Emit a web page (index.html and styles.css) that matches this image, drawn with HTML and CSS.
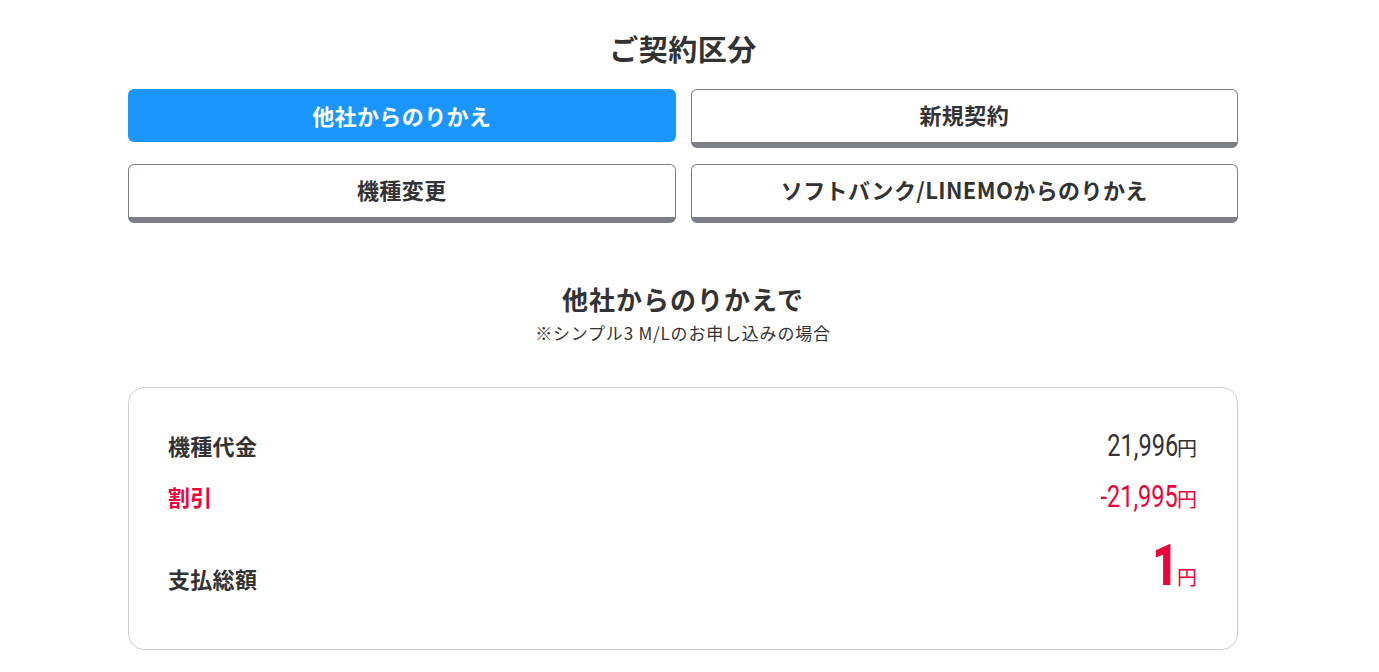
FILE: index.html
```html
<!DOCTYPE html>
<html lang="ja">
<head>
<meta charset="utf-8">
<link rel="stylesheet" href="styles.css">
</head>
<body>
<main class="wrap">
  <h2 class="title">ご契約区分</h2>
  <div class="tabs">
    <button class="tab active">他社からのりかえ</button>
    <button class="tab">新規契約</button>
    <button class="tab">機種変更</button>
    <button class="tab">ソフトバンク/LINEMOからのりかえ</button>
  </div>
  <div class="sub">
    <h3 class="sub-title">他社からのりかえで</h3>
    <p class="sub-note">※シンプル3 M/Lのお申し込みの場合</p>
  </div>
  <div class="card">
    <div class="row">
      <span class="label">機種代金</span>
      <span class="value"><span class="num">21,996</span><span class="yen">円</span></span>
    </div>
    <div class="row red">
      <span class="label">割引</span>
      <span class="value"><span class="num">-21,995</span><span class="yen">円</span></span>
    </div>
    <div class="row total">
      <span class="label">支払総額</span>
      <span class="value red"><span class="num big">1</span><span class="yen">円</span></span>
    </div>
  </div>
</main>
</body>
</html>
```
FILE: styles.css
```css
* { box-sizing: border-box; }
body {
  margin: 0;
  background: #fff;
  color: #333;
  font-family: "Noto Sans CJK JP", "Noto Sans", sans-serif;
}
.wrap {
  width: 1110px;
  margin-left: 128px;
  padding-top: 27px;
}
.title {
  margin: 0;
  text-align: center;
  font-size: 29px;
  font-weight: 700;
  line-height: 42px;
  letter-spacing: 0.5px;
}
.tabs {
  display: grid;
  grid-template-columns: 1fr 1fr;
  column-gap: 15px;
  row-gap: 16px;
  margin-top: 20px;
}
.tab {
  height: 59px;
  border: 1px solid #7d7f87;
  border-bottom: 6px solid #7d7f87;
  border-radius: 6px;
  background: #fff;
  color: #333;
  font-family: "Noto Sans CJK JP", sans-serif;
  font-size: 22px;
  font-weight: 700;
  letter-spacing: 0.4px;
  padding: 0 0 4px;
  line-height: 1;
}
.tab.active {
  height: 53px;
  background: #1b96fe;
  border: none;
  color: #fff;
  padding: 0 0 2px;
}
.sub {
  margin-top: 58px;
  text-align: center;
}
.sub-title {
  margin: 0;
  font-size: 26px;
  font-weight: 700;
  line-height: 36px;
  letter-spacing: 1px;
}
.sub-note {
  margin: 0;
  margin-top: 4px;
  font-size: 17px;
  line-height: 24px;
  letter-spacing: 0.8px;
}
.card {
  margin-top: 42px;
  border: 1px solid #cfcfcf;
  border-radius: 16px;
  padding: 33px 40px 48px 39px;
  height: 263px;
}
.row {
  display: flex;
  justify-content: space-between;
  align-items: center;
  height: 48px;
}
.row + .row { margin-top: 3px; }
.row.total {
  margin-top: 14px;
  align-items: flex-end;
  height: 60px;
}
.label {
  font-size: 22px;
  font-weight: 700;
  letter-spacing: 0.3px;
}
.red { color: #e8063c; }
.value {
  display: flex;
  align-items: baseline;
}
.num {
  display: inline-block;
  font-family: Roboto, "Liberation Sans", sans-serif;
  font-size: 31px;
  transform: scaleX(0.76);
  transform-origin: right center;
  margin-right: -1px;
}
.num.big {
  font-size: 57px;
  font-weight: 900;
  line-height: 1;
  transform: scaleX(0.78);
}
.yen {
  font-size: 20px;
}
```
